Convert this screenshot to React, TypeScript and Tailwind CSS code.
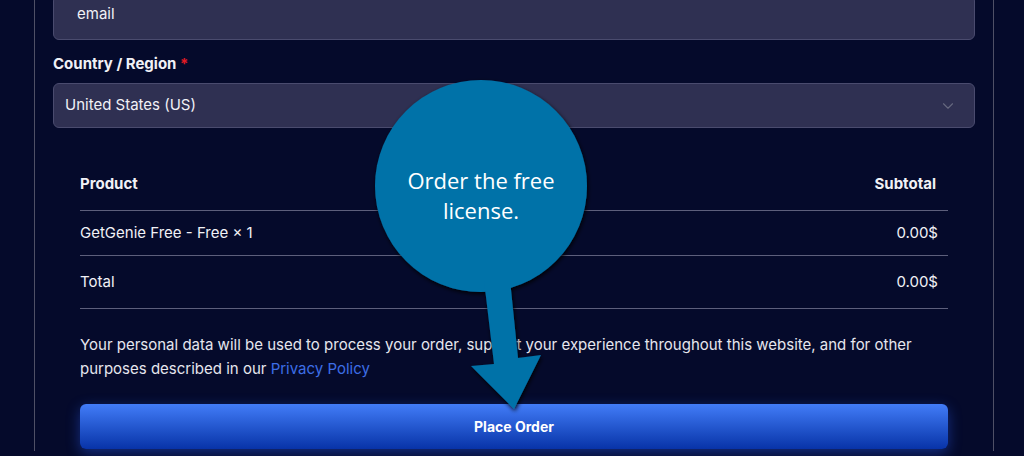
import { ChevronDown } from "lucide-react";

function Callout() {
  return (
    <svg
      className="absolute inset-0 pointer-events-none"
      width={1024}
      height={456}
      viewBox="0 0 1024 456"
    >
      <defs>
        <filter id="edge" x="-20%" y="-20%" width="140%" height="140%">
          <feDropShadow dx="1" dy="2" stdDeviation="2" floodColor="#000" floodOpacity="0.9" />
        </filter>
      </defs>
      <g filter="url(#edge)" fill="#0272a8">
        <circle cx={481} cy={186} r={106} />
        <polygon points="484,280 510,280 518,358 541,355 514,409 471,366 494,364" />
      </g>
    </svg>
  );
}

export default function App() {
  return (
    <div
      className="relative w-[1024px] h-[456px] overflow-hidden bg-[#050a2b] text-[#f1f1f6]"
      style={{ fontFamily: "Inter, 'Liberation Sans', sans-serif" }}
    >
      <div className="ml-[34px] w-[960px] h-full border-x border-[#4f5066] px-[18px]">
        {/* Email field, cut off at the top */}
        <div className="-mt-[5px] h-[45px] rounded-md border border-[#4a4b6e] bg-[#2f3052] pl-[23px] pt-[7px] text-[15px] leading-[22px]">
          email
        </div>

        <label className="block mt-[13px] text-[15px] font-bold leading-[22px]">
          Country / Region <span className="text-[#e01b24]">*</span>
        </label>

        {/* Select */}
        <div className="mt-[8px] h-[45px] flex items-center justify-between rounded-md border border-[#4a4b6e] bg-[#2f3052] pl-[11px] pr-[17px] text-[15px]">
          <span>United States (US)</span>
          <ChevronDown size={18} strokeWidth={1.5} className="text-[#66687f]" />
        </div>

        {/* Order table */}
        <div className="mx-[27px] mt-[31px]">
          <div className="h-[52px] flex items-center justify-between border-b border-[#5d5f7c] text-[15px] font-bold pr-[12px]">
            <span>Product</span>
            <span>Subtotal</span>
          </div>
          <div className="h-[45px] flex items-center justify-between border-b border-[#5d5f7c] text-[15px] pr-[10px]">
            <span>GetGenie Free - Free × 1</span>
            <span>0.00$</span>
          </div>
          <div className="h-[53px] flex items-center justify-between border-b border-[#5d5f7c] text-[15px] pr-[10px]">
            <span>Total</span>
            <span>0.00$</span>
          </div>

          <p className="mt-[24px] text-[15px] leading-[24px] text-[#e6e6ee]">
            Your personal data will be used to process your order, support your experience throughout this website, and for other
            purposes described in our <a className="text-[#3d6ee6]">Privacy Policy</a>
          </p>

          <button className="mt-[23px] w-full h-[45px] rounded-md bg-gradient-to-b from-[#427cf8] to-[#0833a8] text-white text-[14px] font-bold shadow-[0_4px_14px_rgba(40,90,240,0.45)]">
            Place Order
          </button>
        </div>
      </div>

      <Callout />
      <div
        className="absolute left-[375px] top-[165px] w-[212px] text-center text-white text-[22px] leading-[30px]"
        style={{ fontFamily: "'Open Sans', sans-serif" }}
      >
        Order the free
        <br />
        license.
      </div>
    </div>
  );
}
